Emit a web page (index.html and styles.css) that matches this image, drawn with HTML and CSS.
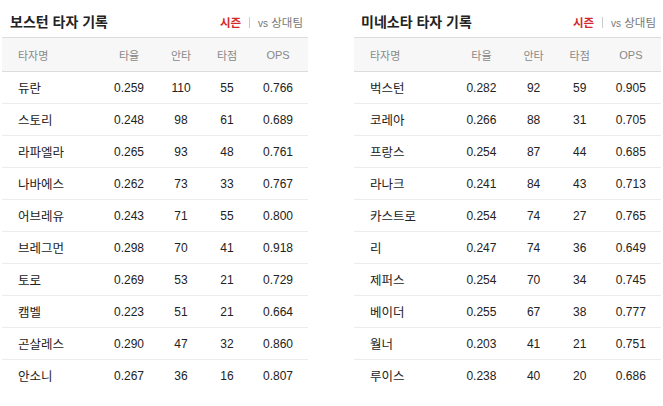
FILE: index.html
```html
<!DOCTYPE html>
<html lang="ko">
<head>
<meta charset="utf-8">
<link rel="stylesheet" href="styles.css">
</head>
<body>
<div class="page">
  <section class="board">
    <div class="board-head">
      <h2 class="title">보스턴 타자 기록</h2>
      <div class="tabs"><span class="tab on">시즌</span><span class="sep"></span><span class="tab"><span class="vs">vs</span> 상대팀</span></div>
    </div>
    <table class="stats">
      <thead><tr><th class="name">타자명</th><th>타율</th><th>안타</th><th>타점</th><th>OPS</th></tr></thead>
      <tbody>
        <tr><td class="name">듀란</td><td>0.259</td><td>110</td><td>55</td><td>0.766</td></tr>
        <tr><td class="name">스토리</td><td>0.248</td><td>98</td><td>61</td><td>0.689</td></tr>
        <tr><td class="name">라파엘라</td><td>0.265</td><td>93</td><td>48</td><td>0.761</td></tr>
        <tr><td class="name">나바에스</td><td>0.262</td><td>73</td><td>33</td><td>0.767</td></tr>
        <tr><td class="name">어브레유</td><td>0.243</td><td>71</td><td>55</td><td>0.800</td></tr>
        <tr><td class="name">브레그먼</td><td>0.298</td><td>70</td><td>41</td><td>0.918</td></tr>
        <tr><td class="name">토로</td><td>0.269</td><td>53</td><td>21</td><td>0.729</td></tr>
        <tr><td class="name">캠벨</td><td>0.223</td><td>51</td><td>21</td><td>0.664</td></tr>
        <tr><td class="name">곤살레스</td><td>0.290</td><td>47</td><td>32</td><td>0.860</td></tr>
        <tr><td class="name">안소니</td><td>0.267</td><td>36</td><td>16</td><td>0.807</td></tr>
      </tbody>
    </table>
  </section>
  <section class="board">
    <div class="board-head">
      <h2 class="title">미네소타 타자 기록</h2>
      <div class="tabs"><span class="tab on">시즌</span><span class="sep"></span><span class="tab"><span class="vs">vs</span> 상대팀</span></div>
    </div>
    <table class="stats">
      <thead><tr><th class="name">타자명</th><th>타율</th><th>안타</th><th>타점</th><th>OPS</th></tr></thead>
      <tbody>
        <tr><td class="name">벅스턴</td><td>0.282</td><td>92</td><td>59</td><td>0.905</td></tr>
        <tr><td class="name">코레아</td><td>0.266</td><td>88</td><td>31</td><td>0.705</td></tr>
        <tr><td class="name">프랑스</td><td>0.254</td><td>87</td><td>44</td><td>0.685</td></tr>
        <tr><td class="name">라나크</td><td>0.241</td><td>84</td><td>43</td><td>0.713</td></tr>
        <tr><td class="name">카스트로</td><td>0.254</td><td>74</td><td>27</td><td>0.765</td></tr>
        <tr><td class="name">리</td><td>0.247</td><td>74</td><td>36</td><td>0.649</td></tr>
        <tr><td class="name">제퍼스</td><td>0.254</td><td>70</td><td>34</td><td>0.745</td></tr>
        <tr><td class="name">베이더</td><td>0.255</td><td>67</td><td>38</td><td>0.777</td></tr>
        <tr><td class="name">월너</td><td>0.203</td><td>41</td><td>21</td><td>0.751</td></tr>
        <tr><td class="name">루이스</td><td>0.238</td><td>40</td><td>20</td><td>0.686</td></tr>
      </tbody>
    </table>
  </section>
</div>
</body>
</html>
```
FILE: styles.css
```css
* { box-sizing: border-box; }
html, body { margin: 0; padding: 0; background: #fff; }
body {
  font-family: "Liberation Sans", "Noto Sans CJK KR", sans-serif;
  font-size: 12px;
  color: #222;
}
.page {
  display: flex;
  gap: 46px;
  padding-left: 2px;
}
.board { width: 306px; flex: none; }
.board + .board { width: 307px; }
.board-head {
  height: 37px;
  display: flex;
  justify-content: space-between;
  align-items: flex-start;
  padding: 13px 5px 0 8px;
}
.board + .board .board-head { padding-left: 7px; }
.title {
  margin: 0;
  font-size: 14px;
  font-weight: bold;
  line-height: 18px;
  color: #222;
}
.tabs {
  display: flex;
  align-items: center;
  height: 18px;
  font-size: 11.5px;
  color: #777;
}
.tab.on { color: #d42a2e; font-weight: bold; }
.vs { font-size: 10px; }
.sep {
  width: 1px;
  height: 11px;
  background: #ccc;
  margin: 0 8px 0 8px;
}
.stats {
  width: 100%;
  border-collapse: collapse;
  table-layout: fixed;
}
.stats th, .stats td {
  padding: 0;
  text-align: center;
  font-weight: normal;
}
.stats th:nth-child(1), .stats td:nth-child(1) { width: 100px; }
.stats th:nth-child(2), .stats td:nth-child(2) { width: 54px; }
.stats th:nth-child(3), .stats td:nth-child(3) { width: 50px; }
.stats th:nth-child(4), .stats td:nth-child(4) { width: 42px; }
.stats th:nth-child(5), .stats td:nth-child(5) { width: 60px; }
.stats thead tr {
  background: #f7f7f7;
  border-top: 1px solid #dcdcdc;
  border-bottom: 1px solid #dcdcdc;
}
.stats th {
  height: 34px;
  font-size: 11px;
  color: #888;
}
.stats td { height: 32px; color: #222; }
.stats tbody tr { border-bottom: 1px solid #ececec; }
.stats tbody tr:last-child { border-bottom: 0; }
.stats .name { text-align: left; padding-left: 16px; }
.stats td.name { font-size: 12.5px; }
```
